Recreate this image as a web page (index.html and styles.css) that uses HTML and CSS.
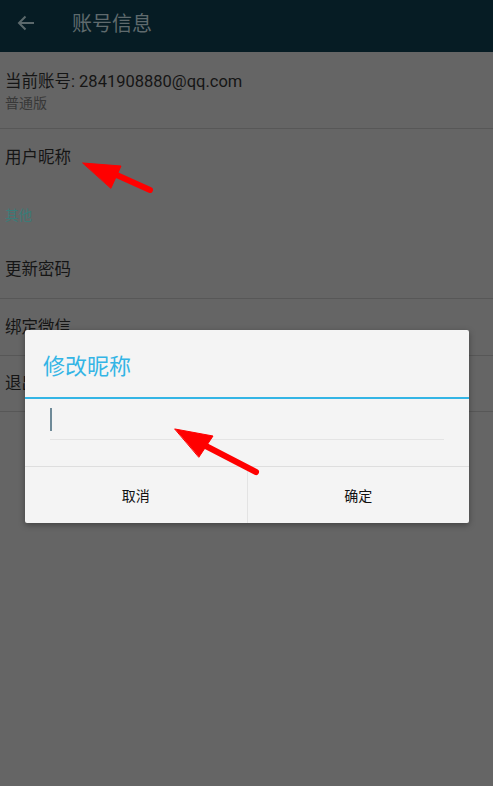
FILE: index.html
```html
<!DOCTYPE html>
<html lang="zh-CN">
<head>
  <meta charset="UTF-8">
  <meta name="viewport" content="width=device-width, initial-scale=1.0">
  <title>账号信息</title>
  <link rel="stylesheet" href="styles.css">
</head>
<body>
<div class="screen">
  <header class="toolbar">
    <span class="back">
      <svg width="18" height="16" viewBox="0 0 18 16"><path d="M17 8H2M8.5 1.5L2 8l6.5 6.5" fill="none" stroke="currentColor" stroke-width="2"/></svg>
    </span>
    <h1>账号信息</h1>
  </header>

  <ul class="prefs">
    <li class="pref pref-account">
      <div class="pref-title">当前账号: 2841908880@qq.com</div>
      <div class="pref-summary">普通版</div>
    </li>
    <li class="pref pref-nick">
      <div class="pref-title">用户昵称</div>
    </li>
    <li class="pref-category">其他</li>
    <li class="pref divided">
      <div class="pref-title">更新密码</div>
    </li>
    <li class="pref divided">
      <div class="pref-title">绑定微信</div>
    </li>
    <li class="pref divided last">
      <div class="pref-title">退出登录</div>
    </li>
  </ul>

  <!-- edit nickname dialog -->
  <div class="dialog">
    <div class="dialog-title">修改昵称</div>
    <div class="dialog-body">
      <div class="edit-field"><span class="caret"></span></div>
    </div>
    <div class="dialog-buttons">
      <button type="button">取消</button>
      <button type="button">确定</button>
    </div>
  </div>

  <!-- hand-drawn annotation arrows -->
  <svg class="marks" width="493" height="786" viewBox="0 0 493 786">
    <g fill="#ff0000" stroke="#ff0000" stroke-linecap="round">
      <line x1="150" y1="190" x2="110" y2="172" stroke-width="6"/>
      <polygon points="83,163 121,166 111,188" stroke-width="1"/>
      <line x1="256" y1="472" x2="200" y2="443" stroke-width="6"/>
      <polygon points="175,429 213,436 199,457" stroke-width="1"/>
    </g>
  </svg>
</div>
</body>
</html>
```

FILE: styles.css
```css
:root {
  --dim-bg: #656565;
  --toolbar: #061c24;
  --text: #151515;
  --text-light: #383838;
  --accent-dim: #3b7b78;
  --divider: #575757;
  --dialog: #f4f4f4;
  --holo-blue: #33b5e5;
}

* {
  margin: 0;
  padding: 0;
  box-sizing: border-box;
}

body {
  font-family: Roboto, "Noto Sans CJK SC", sans-serif;
  background: var(--dim-bg);
  color: var(--text);
}

.screen {
  position: relative;
  width: 493px;
  height: 786px;
  overflow: hidden;
}

.toolbar {
  height: 52px;
  background: var(--toolbar);
  display: flex;
  align-items: center;
  color: #5b686b;
}

.back {
  display: flex;
  width: 72px;
  padding-left: 17px;
  padding-bottom: 6px;
}

.toolbar h1 {
  font-size: 20px;
  font-weight: 400;
  color: #5f6a6d;
  padding-bottom: 7px;
}

.prefs {
  list-style: none;
}

.pref {
  padding-left: 5px;
  display: flex;
  flex-direction: column;
  justify-content: center;
}

.pref-title {
  font-size: 16.5px;
  line-height: 22px;
}

.pref-summary {
  font-size: 14px;
  line-height: 21px;
  color: var(--text-light);
}

.pref-account {
  height: 77px;
  border-bottom: 1px solid var(--divider);
  padding-top: 4px;
}

.pref-nick {
  height: 58px;
}

.pref-category {
  height: 54px;
  padding-left: 5px;
  display: flex;
  align-items: center;
  font-size: 13.5px;
  color: var(--accent-dim);
}

.pref.divided {
  height: 57px;
  padding-top: 1px;
}

.pref.divided + .pref.divided {
  border-top: 1px solid var(--divider);
}

.pref.last {
  border-bottom: 1px solid var(--divider);
}

.dialog {
  position: absolute;
  top: 330px;
  left: 25px;
  width: 444px;
  height: 193px;
  background: var(--dialog);
  border-radius: 2px;
  box-shadow: 0 2px 6px rgba(0, 0, 0, 0.35);
  display: flex;
  flex-direction: column;
}

.dialog-title {
  height: 69px;
  padding-left: 18px;
  padding-top: 1px;
  display: flex;
  align-items: center;
  font-size: 22px;
  color: var(--holo-blue);
  border-bottom: 2px solid var(--holo-blue);
}

.dialog-body {
  height: 67px;
  padding: 9px 25px 0;
}

.edit-field {
  height: 32px;
  border-bottom: 1px solid #e4e4e4;
}

.caret {
  display: block;
  width: 2px;
  height: 23px;
  background: #6e8a98;
}

.dialog-buttons {
  flex: 1;
  display: flex;
  border-top: 1px solid #dedede;
}

.dialog-buttons button {
  flex: 1;
  border: none;
  background: transparent;
  font-family: inherit;
  font-size: 14px;
  color: #111;
  padding-bottom: 1px;
}

.dialog-buttons button + button {
  border-left: 1px solid #e3e3e3;
}

.marks {
  position: absolute;
  top: 0;
  left: 0;
  pointer-events: none;
}
```
